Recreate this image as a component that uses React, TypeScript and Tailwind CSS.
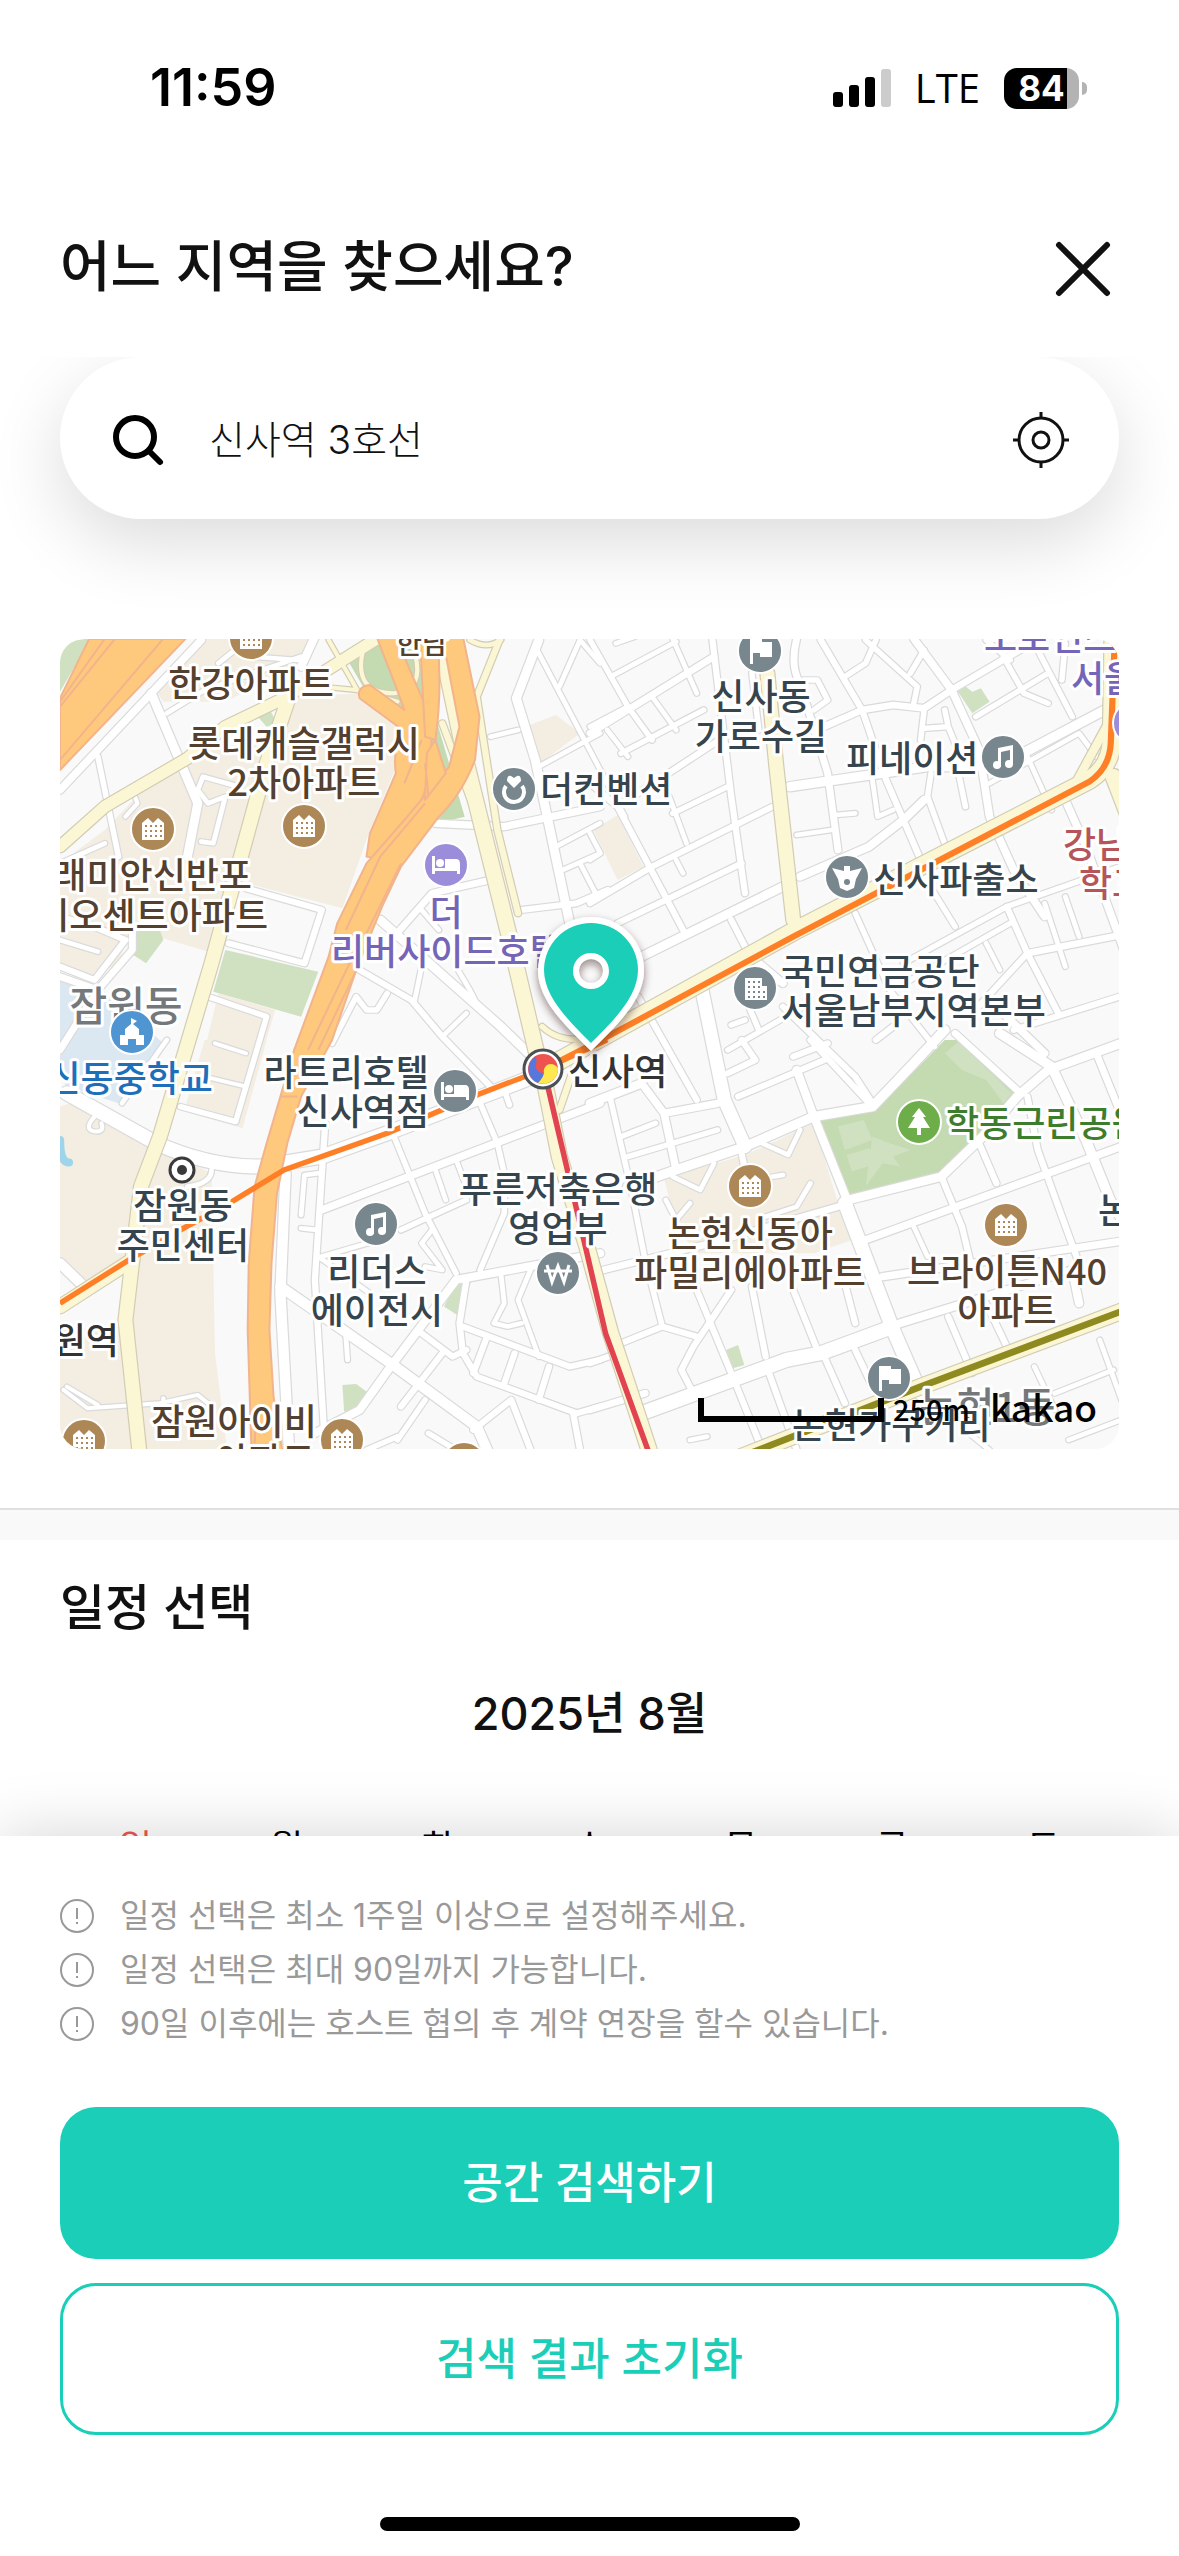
import { useId } from "react";
import type { ReactNode } from "react";

type Quad = "nw" | "ne" | "sw" | "se";
type Shape = { q: Quad; d: string };
type Road = Shape & { w: number };

const ORIGIN: Record<Quad, string> = {
  nw: "translate(0 0)",
  ne: "translate(1539 0)",
  sw: "translate(0 1230)",
  se: "translate(1539 1230)",
};

const BEIGE: Shape[] = [
  { q: "nw", d: "M410 26H720L700 100 480 215 300 215 270 170Z" },
  { q: "nw", d: "M690 200L880 190 1000 290 980 400 900 600 820 835 560 765 500 720 560 500 600 370Z" },
  { q: "nw", d: "M330 390L590 320 560 500 430 965 300 925 0 880V700L130 600 250 470Z" },
  { q: "nw", d: "M460 1090L625 1140 590 1260H420Z" },
  { q: "nw", d: "M0 900L200 905 170 1000 90 1040 0 1010Z" },
  { q: "nw", d: "M1365 285L1440 255 1510 310 1395 400Z" },
  { q: "ne", d: "M10 600L80 555 155 710 80 750Z" },
  { q: "sw", d: "M0 200L60 180 280 320 440 400 450 940 485 1230H0Z" },
  { q: "sw", d: "M420 0H600L530 265 360 215Z" },
  { q: "se", d: "M215 415L450 345 650 250 720 490 760 600 650 640 310 640 250 560Z" },
];

const LAND: (Shape & { c: string })[] = [
  { q: "sw", c: "#f9f9f9", d: "M0 660L60 740 190 700 170 860 0 870Z" },
  { q: "nw", c: "#d0e1c1", d: "M0 60Q30 26 90 26L0 185Z" },
  { q: "nw", c: "#c4dab1", d: "M835 90L900 40 1040 60 1060 190 1000 260 880 170Z" },
  { q: "nw", c: "#c4dab1", d: "M1090 260L1175 560 970 610 1060 400Z" },
  { q: "nw", c: "#d0e1c1", d: "M480 960L750 1025 700 1160 445 1085Z" },
  { q: "nw", c: "#d0e1c1", d: "M225 900H290L300 930 250 1000 205 970Z" },
  { q: "nw", c: "#d0e1c1", d: "M570 255L610 240 630 280 600 290Z" },
  { q: "nw", c: "#dbe8f2", d: "M0 1050L130 1085 300 1240 170 1420 20 1370 0 1340Z" },
  { q: "ne", c: "#d0e1c1", d: "M1065 180L1085 165 1110 185 1135 175 1160 215 1110 250Z" },
  { q: "sw", c: "#d0e1c1", d: "M1150 730L1195 720 1160 830 1115 800Z" },
  { q: "sw", c: "#d0e1c1", d: "M820 1035L860 1032 890 1055 865 1105 825 1115Z" },
  { q: "se", c: "#d0e1c1", d: "M395 930L430 915 448 975 415 985Z" },
  { q: "se", c: "#c4dab1", d: "M665 240L830 210 1030 0H1080L1240 170 1130 300 1020 405 745 470Z" },
  { q: "se", c: "#d0e1c1", d: "M1030 40L1070 5 1225 160 1200 190 1150 120 1080 90Z" },
  { q: "se", c: "#d0e1c1", d: "M720 260L795 240 820 300 740 330Z" },
  { q: "se", c: "#d0e1c1", d: "M745 345L810 325 835 350 820 375 760 395Z" },
  { q: "se", c: "#d0e1c1", d: "M820 290L870 310 930 330 880 350 900 380 850 370 800 440Z" },
];

const WHITE: Road[] = [
  { q: "nw", w: 22, d: "M0 480L265 190 410 30" },
  { q: "nw", w: 26, d: "M265 190L400 520 370 680" },
  { q: "nw", w: 16, d: "M110 380L170 680" },
  { q: "nw", w: 14, d: "M310 250L420 180 700 80" },
  { q: "nw", w: 14, d: "M460 100L520 50 560 80 690 90" },
  { q: "nw", w: 24, d: "M740 20L700 110" },
  { q: "nw", w: 14, d: "M520 470L415 440 400 480 430 520 480 500 445 640 410 635" },
  { q: "nw", w: 12, d: "M190 560L225 520 210 480" },
  { q: "nw", w: 14, d: "M0 700L130 640" },
  { q: "nw", w: 18, d: "M540 775L760 840 710 1000 490 940" },
  { q: "nw", w: 18, d: "M0 1010L100 1050 190 930 100 890 0 860" },
  { q: "nw", w: 14, d: "M0 930L110 965" },
  { q: "nw", w: 20, d: "M210 900V960L110 1080 0 1260" },
  { q: "nw", w: 20, d: "M0 1040L110 1080" },
  { q: "nw", w: 16, d: "M430 1100L600 1160 510 1475 350 1430" },
  { q: "nw", w: 12, d: "M450 1240L540 1270M420 1340L540 1370" },
  { q: "nw", w: 26, d: "M1390 30L1325 205 1380 390 1480 880" },
  { q: "nw", w: 14, d: "M1380 50L1640 560" },
  { q: "nw", w: 14, d: "M1250 320L1330 300M1390 410L1568 310" },
  { q: "nw", w: 14, d: "M1450 170L1510 30 1568 100" },
  { q: "nw", w: 22, d: "M1090 580L1290 590 1568 530" },
  { q: "nw", w: 14, d: "M1440 650L1568 580M1460 720L1568 670M1510 700L1560 800" },
  { q: "nw", w: 18, d: "M1340 840L1500 820 1590 780" },
  { q: "nw", w: 26, d: "M930 870L1280 1190 1360 1270" },
  { q: "nw", w: 20, d: "M970 920L1080 790 1250 750" },
  { q: "nw", w: 14, d: "M1050 840L1100 900M1030 1110L1050 1010" },
  { q: "nw", w: 18, d: "M870 1020L1020 1110 1110 1220 1260 1380" },
  { q: "nw", w: 14, d: "M1110 1220L1180 1150M1150 1010L1190 1080 1220 1140" },
  { q: "nw", w: 16, d: "M790 1240L860 1100 890 1140 920 1140 950 1090" },
  { q: "ne", w: 20, d: "M0 310L360 80" },
  { q: "ne", w: 14, d: "M60 140L250 35M75 40L130 20" },
  { q: "ne", w: 16, d: "M0 30L110 230 180 330" },
  { q: "ne", w: 14, d: "M180 200L250 300M50 300L110 380M110 230L0 290M240 26L310 190" },
  { q: "ne", w: 18, d: "M355 26L410 500 450 790" },
  { q: "ne", w: 16, d: "M90 370L330 240M240 550L400 470" },
  { q: "ne", w: 18, d: "M0 820L180 710 530 530" },
  { q: "ne", w: 18, d: "M80 530L270 900M0 460L80 530 390 320" },
  { q: "ne", w: 18, d: "M80 880L440 700" },
  { q: "ne", w: 26, d: "M130 990L560 770" },
  { q: "ne", w: 14, d: "M0 610L30 670 0 690M230 500L280 640M250 690L270 730" },
  { q: "ne", w: 18, d: "M410 870L490 1030 560 1060" },
  { q: "ne", w: 20, d: "M600 26Q580 110 610 160L690 430 720 660" },
  { q: "ne", w: 28, d: "M580 470L980 410 1120 410 1220 390 1568 200" },
  { q: "ne", w: 20, d: "M680 290L790 240 880 225 970 235 1050 180 1330 10" },
  { q: "ne", w: 18, d: "M670 30L790 240 860 450 960 690" },
  { q: "ne", w: 16, d: "M830 30L800 100 740 140M800 30L950 170 940 220M970 60L930 130" },
  { q: "ne", w: 22, d: "M940 26L1050 180 1130 360 1160 560 1230 720 1320 860" },
  { q: "ne", w: 16, d: "M1200 80L1260 190 1330 220M1120 260L1330 130" },
  { q: "ne", w: 16, d: "M1300 60L1400 260M1150 30L1220 90M1380 40L1370 150" },
  { q: "ne", w: 14, d: "M1160 460L1420 310 1470 380M1270 380L1340 540" },
  { q: "ne", w: 16, d: "M990 430L980 500 1040 670M1070 430L1090 530" },
  { q: "ne", w: 14, d: "M820 450L835 560 880 540M710 555L770 550M600 615L700 600" },
  { q: "ne", w: 24, d: "M610 740L810 650 910 570 970 510" },
  { q: "ne", w: 16, d: "M970 240L960 330M970 295L1040 290 1030 240M1040 290L1060 340" },
  { q: "ne", w: 16, d: "M620 150L660 150 690 210 650 240M470 130L490 300" },
  { q: "ne", w: 16, d: "M770 850L870 1080 1000 1250M970 740L1060 890" },
  { q: "ne", w: 22, d: "M1380 510L1440 650 1568 1010" },
  { q: "ne", w: 16, d: "M910 1000L1210 830 1568 700M930 1050L1220 880" },
  { q: "ne", w: 20, d: "M1270 970L1568 910" },
  { q: "ne", w: 18, d: "M1210 830L1270 970 1360 1150M1270 970L1110 1150M1230 1200L1568 1090" },
  { q: "ne", w: 14, d: "M1320 820L1380 1010M1380 800L1420 920M1150 940L1190 1020" },
  { q: "ne", w: 22, d: "M1180 1130L1320 1270M480 990L560 1060" },
  { q: "ne", w: 38, d: "M325 1080L390 1410 450 1550" },
  { q: "ne", w: 16, d: "M400 1260L620 1130M410 1185L450 1170M440 1080L490 1200" },
  { q: "ne", w: 18, d: "M560 1130L770 1340 820 1420M830 1230L880 1190" },
  { q: "ne", w: 18, d: "M140 1100L310 1410" },
  { q: "sw", w: 42, d: "M20 160L280 310Q430 380 580 380L760 350 950 280 1400 100" },
  { q: "sw", w: 30, d: "M655 400L640 760 665 1230" },
  { q: "sw", w: 30, d: "M640 740L960 970 1210 1160 1240 1230" },
  { q: "sw", w: 24, d: "M1568 640L1150 720 960 980 870 1110 740 1180" },
  { q: "sw", w: 18, d: "M770 250L740 720 770 1230" },
  { q: "sw", w: 22, d: "M760 510L1568 190" },
  { q: "sw", w: 16, d: "M990 570L1180 480M970 290L1060 520 1150 700" },
  { q: "sw", w: 16, d: "M1220 190L1270 310 1290 400 1290 520 1220 690M1290 150L1305 195" },
  { q: "sw", w: 18, d: "M1050 880L1140 950 1180 930M1110 940L990 1100M1170 860L1480 980 1568 960" },
  { q: "sw", w: 18, d: "M1180 720L1160 850 1170 940 1210 1010 1500 1120 1568 1100" },
  { q: "sw", w: 14, d: "M1370 680L1330 780 1390 950M1280 700L1290 790 1260 850 1300 860 1340 850" },
  { q: "sw", w: 18, d: "M1240 890L1200 1000M1320 940L1290 1030M1420 980L1390 1080M1310 1080L1370 1240M1310 1080L1200 1170M1490 1120L1510 1230" },
  { q: "sw", w: 14, d: "M1090 390L1120 480M1150 360L1180 440M700 525L710 405 750 400M760 650L960 590" },
  { q: "sw", w: 14, d: "M1060 680L1110 690 1050 610 1080 570M700 565L745 570M750 650L900 760M830 890L835 960" },
  { q: "sw", w: 16, d: "M980 1200L1060 1080M1070 1180L1150 1230M890 1230L980 1190" },
  { q: "sw", w: 12, d: "M10 1050L80 1105 290 1090 400 1065 430 1090M110 1095L20 1040M300 1090L300 1075" },
  { q: "sw", w: 12, d: "M110 220Q60 270 105 275 130 275 120 250" },
  { q: "sw", w: 30, d: "M0 670L60 730" },
  { q: "sw", w: 14, d: "M310 0L180 190M440 390Q440 430 370 440" },
  { q: "se", w: 24, d: "M600 90L650 230 750 490" },
  { q: "se", w: 26, d: "M0 190L150 130" },
  { q: "se", w: 22, d: "M150 130L215 220 370 190M215 220L250 390" },
  { q: "se", w: 28, d: "M110 440L250 390 450 320 650 230 820 200 940 70 1030 -30" },
  { q: "se", w: 18, d: "M820 200L640 0M590 50L690 10M440 0L480 60 400 100" },
  { q: "se", w: 16, d: "M60 180L120 450 160 660 210 860M90 290L190 250M110 350L370 270" },
  { q: "se", w: 18, d: "M430 170L680 60M440 340L450 390" },
  { q: "se", w: 26, d: "M750 480L1020 410 1140 290 1240 170 1330 90 1568 0" },
  { q: "se", w: 20, d: "M1060 -20L1250 160M1470 40L1568 290" },
  { q: "se", w: 28, d: "M1190 -20L1340 80 1440 300 1510 480 1568 580" },
  { q: "se", w: 18, d: "M1270 170L1300 330 1430 700M1130 310L1180 430M1020 410L1080 560 1110 690" },
  { q: "se", w: 22, d: "M800 600L1568 310M850 710L1568 600" },
  { q: "se", w: 24, d: "M900 850L1400 690 1420 790" },
  { q: "se", w: 40, d: "M740 490L880 870 960 1060" },
  { q: "se", w: 42, d: "M150 1120L570 960 670 940 880 860" },
  { q: "se", w: 20, d: "M0 700L350 610 720 500M0 1110L160 1060" },
  { q: "se", w: 18, d: "M290 700L430 1050 500 1230M470 740L510 950M590 750L660 930M740 730L770 850" },
  { q: "se", w: 18, d: "M90 910L210 860 310 890M410 750L300 920 265 990 300 1060M0 970L80 940" },
  { q: "se", w: 18, d: "M520 1000L600 1230M680 950L740 1090M770 930L820 1040M1040 830L1110 1000M1150 790L1210 920" },
  { q: "se", w: 14, d: "M940 560L980 650M1290 980L1350 1110M1480 900L1568 1150M1350 1060L1520 990M1390 1200L1568 1130M1100 1180L1160 1230M290 1200L340 1190" },
  { q: "se", w: 14, d: "M240 410L320 450 360 370M500 310L575 345 610 270M640 430L600 500 510 530M220 480L250 540 290 490M530 410L560 405" },
];

const YELLOW: Road[] = [
  { q: "nw", w: 34, d: "M0 650L130 530 370 385 480 290 660 200 760 130 960 0" },
  { q: "nw", w: 40, d: "M675 170L600 400 520 700 440 1000 290 1520 235 1670 190 2070 230 2460" },
  { q: "nw", w: 12, d: "M780 172L860 180 980 215M880 60Q850 190 970 190 1060 180 1030 70M780 30L860 175" },
  { q: "nw", w: 44, d: "M1110 60L1180 400 1300 900 1400 1340" },
  { q: "nw", w: 18, d: "M1280 20L1210 200 1270 600 1330 850M1110 280L1200 530" },
  { q: "nw", w: 14, d: "M1190 30Q1240 60 1280 30" },
  { q: "nw", w: 16, d: "M1400 1190Q1450 1240 1540 1225" },
  { q: "sw", w: 44, d: "M1400 90L1450 350 1530 620 1599 880 1720 1260" },
  { q: "sw", w: 18, d: "M1450 210L1490 90" },
  { q: "sw", w: 40, d: "M0 800L210 660" },
  { q: "ne", w: 40, d: "M515 130L540 400 590 870" },
  { q: "ne", w: 24, d: "M1410 460L1510 270" },
  { q: "ne", w: 46, d: "M1520 440L1580 600" },
  { q: "ne", w: 52, d: "M-120 1310L590 905 1450 450Q1512 410 1515 330L1520 20" },
  { q: "se", w: 46, d: "M440 1250L960 1040 1580 800" },
];

const HIGHWAY: string[] = [
  "M85 26H365L0 420V205Z",
  "M920 20H980C1010 130 1070 220 1080 300L1075 420C1060 520 1000 610 940 690L890 680 900 610 975 430C970 380 975 330 995 300L870 205Q860 170 900 165L1000 240C970 150 940 80 920 20Z",
  "M1045 20H1095C1105 120 1105 220 1090 330L1060 320Z",
  "M1110 20H1170L1218 260 1205 390C1190 430 1160 500 1100 560L990 710 935 830 860 1020 790 1230 700 1400 660 1540 630 1690 614 1900 608 2100 620 2300 645 2460H556L545 2100 548 1900 565 1670 600 1540 640 1400 680 1260 780 980 805 880 890 700 1000 570 1130 410 1160 290Z",
  "M1065 370L1090 330 1120 430 1060 510Z",
];

const HIGHWAY_LINES =
  "M0 215L130 26M0 230L160 26M0 390L300 26M830 900L930 680 1060 520M890 910L990 700M720 1260L850 980M750 1260L870 1000M1060 400L1070 500M1000 460L1050 330M565 2440L570 2350M640 1400L690 1400";

const RAIL: (Shape & { c: string; w: number })[] = [
  { q: "sw", c: "#ff7f27", w: 16, d: "M0 790L200 660 350 570 500 485 650 390 950 280 1210 165 1400 90 1589 0" },
  { q: "ne", c: "#ff7f27", w: 18, d: "M-120 1310L50 1220 590 920 1450 455Q1508 415 1512 340L1524 20" },
  { q: "se", c: "#8f8a20", w: 20, d: "M440 1250L960 1040 1580 800" },
  { q: "sw", c: "#e14450", w: 16, d: "M1405 90L1480 420 1530 640 1584 880 1714 1250" },
];

type Glyph =
  | "apartment" | "office" | "flag" | "music" | "bed" | "heart" | "police" | "won" | "tree" | "school";

function PoiGlyph({ kind }: { kind: Glyph }) {
  switch (kind) {
    case "apartment":
      return (
        <g>
          <path fill="#fff" d="M-11 -6L-5 -11 0 -6 5 -11 11 -6V11H-11Z" />
          <path stroke="#ad8856" strokeWidth="2" strokeDasharray="2 3" d="M-8 -3H9M-8 2H9M-8 7H9" />
        </g>
      );
    case "office":
      return (
        <g>
          <path fill="#fff" d="M-10 -10H7V-2H12V12H-10Z" />
          <path stroke="#78868d" strokeWidth="2" strokeDasharray="2 3" d="M-7 -6H5M-7 -1H5M-7 4H10M-7 9H10" />
        </g>
      );
    case "flag":
      return <path fill="#fff" d="M-10 -12H2V-9H12V6H0V2H-7V13H-10Z" />;
    case "music":
      return (
        <g fill="#fff">
          <path fillRule="evenodd" d="M-5 -9L10 -12V7H7V-7L-2 -5V10H-5Z" />
          <circle cx="-6" cy="8" r="4" />
          <circle cx="6" cy="7" r="4" />
        </g>
      );
    case "bed":
      return (
        <g>
          <path fill="#fff" d="M-14 -9H-11V3H-1V-6H10Q14 -6 14 -1V9H11V6H-11V9H-14Z" />
          <circle cx="-6" cy="-2" r="4" fill="#fff" />
        </g>
      );
    case "heart":
      return (
        <g>
          <path fill="none" stroke="#fff" strokeWidth="4" d="M-8 -3A10 10 0 1 0 8 -3" />
          <path fill="#fff" d="M0 -1L-7 -8Q-7 -14 -3 -13L0 -11 3 -13Q7 -14 7 -8Z" />
        </g>
      );
    case "police":
      return (
        <g>
          <path fill="#fff" d="M-15 -9L-3 -6V-11H3V-6L15 -9 9 2 7 11 0 14 -7 11 -9 2Z" />
          <circle cx="0" cy="5" r="3" fill="#78868d" />
        </g>
      );
    case "won":
      return (
        <path
          fill="none"
          stroke="#fff"
          strokeWidth="3"
          d="M-11 -8L-6 9 0 -7 6 9 11 -8M-14 -2H14"
        />
      );
    case "tree":
      return <path fill="#fff" d="M0 -14L7 -5H4L11 6H2V13H-2V6H-11L-4 -5H-7Z" />;
    case "school":
      return <path fill="#fff" d="M-1 -14L5 -11 1 -8 7 -3V3H12V13H4V7H-4V13H-12V3H-7V-3L-1 -8Z" />;
  }
}

const POIS: { x: number; y: number; c: string; kind: Glyph }[] = [
  { x: 191, y: -1, c: "#ad8856", kind: "apartment" },
  { x: 93, y: 190, c: "#ad8856", kind: "apartment" },
  { x: 244, y: 187, c: "#ad8856", kind: "apartment" },
  { x: 24, y: 802, c: "#ad8856", kind: "apartment" },
  { x: 282, y: 801, c: "#ad8856", kind: "apartment" },
  { x: 404, y: 825, c: "#ad8856", kind: "apartment" },
  { x: 690, y: 547, c: "#ad8856", kind: "apartment" },
  { x: 946, y: 586, c: "#ad8856", kind: "apartment" },
  { x: 454, y: 150, c: "#78868d", kind: "heart" },
  { x: 386, y: 226, c: "#9c8dda", kind: "bed" },
  { x: 395, y: 452, c: "#78868d", kind: "bed" },
  { x: 72, y: 393, c: "#4f95d2", kind: "school" },
  { x: 700, y: 12, c: "#78868d", kind: "flag" },
  { x: 829, y: 739, c: "#78868d", kind: "flag" },
  { x: 943, y: 118, c: "#78868d", kind: "music" },
  { x: 316, y: 585, c: "#78868d", kind: "music" },
  { x: 787, y: 238, c: "#78868d", kind: "police" },
  { x: 695, y: 349, c: "#78868d", kind: "office" },
  { x: 498, y: 634, c: "#78868d", kind: "won" },
  { x: 859, y: 483, c: "#6eae4a", kind: "tree" },
  { x: 1075, y: 84, c: "#9c8dda", kind: "bed" },
];

type Anchor = "start" | "middle" | "end";
type Label = { t: string; x: number; y: number; c: string; a: Anchor };

const BROWN = "#54402f";
const SLATE = "#36454d";
const PURPLE = "#7565b8";

const LABELS: Label[] = [
  { t: "한강아파트", x: 191, y: 58, c: BROWN, a: "middle" },
  { t: "롯데캐슬갤럭시", x: 244, y: 118, c: BROWN, a: "middle" },
  { t: "2차아파트", x: 244, y: 157, c: BROWN, a: "middle" },
  { t: "래미안신반포", x: 192, y: 250, c: BROWN, a: "end" },
  { t: "리오센트아파트", x: 208, y: 290, c: BROWN, a: "end" },
  { t: "더", x: 386, y: 287, c: PURPLE, a: "middle" },
  { t: "리버사이드호텔", x: 271, y: 326, c: PURPLE, a: "start" },
  { t: "더컨벤션", x: 480, y: 164, c: SLATE, a: "start" },
  { t: "신사동", x: 701, y: 71, c: SLATE, a: "middle" },
  { t: "가로수길", x: 701, y: 111, c: SLATE, a: "middle" },
  { t: "피네이션", x: 786, y: 133, c: SLATE, a: "start" },
  { t: "도로인스", x: 924, y: 12, c: PURPLE, a: "start" },
  { t: "서울", x: 1011, y: 53, c: PURPLE, a: "start" },
  { t: "강남", x: 1003, y: 219, c: "#b5555a", a: "start" },
  { t: "학교", x: 1019, y: 258, c: "#b5555a", a: "start" },
  { t: "신사파출소", x: 813, y: 254, c: SLATE, a: "start" },
  { t: "국민연금공단", x: 721, y: 346, c: SLATE, a: "start" },
  { t: "서울남부지역본부", x: 721, y: 385, c: SLATE, a: "start" },
  { t: "신동중학교", x: 153, y: 453, c: "#1e6fba", a: "end" },
  { t: "라트리호텔", x: 369, y: 447, c: SLATE, a: "end" },
  { t: "신사역점", x: 369, y: 486, c: SLATE, a: "end" },
  { t: "신사역", x: 508, y: 446, c: "#333333", a: "start" },
  { t: "잠원동", x: 123, y: 580, c: SLATE, a: "middle" },
  { t: "주민센터", x: 123, y: 620, c: SLATE, a: "middle" },
  { t: "잠원역", x: 59, y: 715, c: "#333333", a: "end" },
  { t: "리더스", x: 317, y: 646, c: SLATE, a: "middle" },
  { t: "에이전시", x: 317, y: 685, c: SLATE, a: "middle" },
  { t: "푸른저축은행", x: 498, y: 564, c: SLATE, a: "middle" },
  { t: "영업부", x: 498, y: 603, c: SLATE, a: "middle" },
  { t: "잠원아이비", x: 174, y: 796, c: BROWN, a: "middle" },
  { t: "아파트", x: 255, y: 835, c: BROWN, a: "end" },
  { t: "논현신동아", x: 690, y: 608, c: BROWN, a: "middle" },
  { t: "파밀리에아파트", x: 690, y: 647, c: BROWN, a: "middle" },
  { t: "브라이튼N40", x: 947, y: 646, c: BROWN, a: "middle" },
  { t: "아파트", x: 947, y: 685, c: BROWN, a: "middle" },
  { t: "학동근린공원", x: 886, y: 498, c: "#3f7d2e", a: "start" },
  { t: "논현", x: 1038, y: 585, c: SLATE, a: "start" },
  { t: "논현가구거리", x: 732, y: 800, c: SLATE, a: "start" },
];

function Layer({ q, children }: { q: Quad; children: ReactNode }) {
  return <g transform={ORIGIN[q]}>{children}</g>;
}

function Roads({ roads, casing, fill }: { roads: Road[]; casing: string; fill: string }) {
  return (
    <g fill="none" strokeLinecap="round" strokeLinejoin="round">
      <g stroke={casing}>
        {roads.map((r, i) => (
          <Layer key={i} q={r.q}>
            <path d={r.d} strokeWidth={r.w + 7} />
          </Layer>
        ))}
      </g>
      <g stroke={fill}>
        {roads.map((r, i) => (
          <Layer key={i} q={r.q}>
            <path d={r.d} strokeWidth={r.w} />
          </Layer>
        ))}
      </g>
    </g>
  );
}

function StationMap() {
  const shadow = useId();
  return (
    <svg
      role="img"
      aria-label="신사역 주변 지도"
      viewBox="0 0 1059 810"
      preserveAspectRatio="xMidYMid slice"
      className="block w-full rounded-3xl bg-[#f9f9f9] font-['Noto_Sans_CJK_KR',sans-serif]"
    >
      <defs>
        <filter id={shadow} x="-30%" y="-30%" width="160%" height="160%">
          <feDropShadow dx="0" dy="4" stdDeviation="4" floodColor="#301010" floodOpacity="0.5" />
        </filter>
      </defs>

      <g transform="translate(0 -9) scale(.3444 .3333)">
        {BEIGE.map((s, i) => (
          <Layer key={i} q={s.q}>
            <path d={s.d} fill="#f3ede2" />
          </Layer>
        ))}
        {LAND.map((s, i) => (
          <Layer key={i} q={s.q}>
            <path d={s.d} fill={s.c} />
          </Layer>
        ))}
        <path d="M0 1530Q0 1598 26 1598" fill="none" stroke="#9fd5ea" strokeWidth="24" strokeLinecap="round" />
        <Roads roads={WHITE} casing="#dadada" fill="#ffffff" />
        <Roads roads={YELLOW} casing="#d2ccb4" fill="#fbf6d4" />
        <g fill="#ffc97d" stroke="#f2b48c" strokeWidth="6" strokeLinejoin="round">
          {HIGHWAY.map((d) => (
            <path key={d} d={d} />
          ))}
        </g>
        <path d={HIGHWAY_LINES} fill="none" stroke="#f2b48c" strokeWidth="6" />
        {RAIL.map((r, i) => (
          <Layer key={i} q={r.q}>
            <path d={r.d} fill="none" stroke={r.c} strokeWidth={r.w} strokeLinejoin="round" />
          </Layer>
        ))}
      </g>

      <g strokeWidth="6" strokeLinejoin="round" stroke="#ffffff" fontWeight="500" paintOrder="stroke">
        <text x="362" y="15" fontSize="28" fill={BROWN} textAnchor="middle">한남</text>
        <g fontSize="41" fill="#75787a">
          <text x="66" y="382" textAnchor="middle">잠원동</text>
          <text x="859" y="783">논현1동</text>
        </g>
      </g>

      {POIS.map((p, i) => (
        <g key={i} transform={`translate(${p.x} ${p.y})`}>
          <circle r="22" fill={p.c} stroke="#fff" strokeWidth="2" />
          <PoiGlyph kind={p.kind} />
        </g>
      ))}

      <g transform="translate(122 531)">
        <circle r="12" fill="#fff" stroke="#3a3a3a" strokeWidth="3" />
        <circle r="5" fill="#3a3a3a" />
      </g>

      <g fontSize="36" fontWeight="500" stroke="#ffffff" strokeWidth="6" strokeLinejoin="round" paintOrder="stroke">
        {LABELS.map((l, i) => (
          <text key={i} x={l.x} y={l.y} fill={l.c} textAnchor={l.a}>
            {l.t}
          </text>
        ))}
      </g>

      <g transform="translate(483 430)">
        <circle r="19" fill="#fff" stroke="#4a5054" strokeWidth="3" />
        <circle r="15" fill="#ef5350" />
        <path fill="#5677dc" d="M-7 -13A15 15 0 0 0 0 15Q3 8 0 4 -8 3 -7 -4 -6 -9 -7 -13Z" />
        <path fill="#ffe94f" d="M-5 14A15 15 0 0 0 15 -1Q10 -7 4 -4 0 -1 1 4 0 9 -5 14Z" />
      </g>

      <g filter={`url(#${shadow})`}>
        <path
          fill="#fff"
          fillRule="evenodd"
          d="M531 412C507 388 478 362 478 331A53 53 0 0 1 584 331C584 362 555 388 531 412ZM531 320A12 12 0 0 0 531 344A12 12 0 0 0 531 320Z"
        />
      </g>
      <path
        fill="#1bceb8"
        fillRule="evenodd"
        d="M531 404C509 382 484 358 484 331A47 47 0 0 1 578 331C578 358 553 382 531 404ZM531 314A18 18 0 0 0 531 350A18 18 0 0 0 531 314Z"
      />

      <path fill="none" stroke="#000" strokeWidth="6" d="M641 759V780H821V759" />
      <text x="833" y="782" fontSize="29" fontWeight="500">250m</text>
      <text x="930" y="783" fontSize="37" fontWeight="500">kakao</text>
    </svg>
  );
}

function StatusBar() {
  return (
    <div className="flex h-[176px] items-center justify-between pr-[92px] pl-[150px]">
      <span className="text-[52px] leading-none font-semibold text-black">11:59</span>
      <div className="flex items-center gap-6">
        <svg width="58" height="38" viewBox="0 0 58 38" aria-hidden="true">
          <rect x="0" y="23" width="10" height="15" rx="3" />
          <rect x="16" y="16" width="10" height="22" rx="3" />
          <rect x="32" y="8" width="10" height="30" rx="3" />
          <rect x="48" y="0" width="10" height="38" rx="3" fill="#cccccc" />
        </svg>
        <span className="text-[40px] leading-none font-medium text-black font-['Open_Sans',sans-serif]">LTE</span>
        <div className="flex items-center gap-[3px]">
          <div className="flex h-[41px] w-[75px] items-center justify-center rounded-[13px] bg-[linear-gradient(90deg,#000_84%,#b3b3b3_84%)] text-[35px] leading-none font-bold text-white">
            84
          </div>
          <div className="h-[13px] w-[5px] rounded-r-full bg-[#b3b3b3]" />
        </div>
      </div>
    </div>
  );
}

const WEEKDAYS = ["일", "월", "화", "수", "목", "금", "토"];

const NOTES = [
  "일정 선택은 최소 1주일 이상으로 설정해주세요.",
  "일정 선택은 최대 90일까지 가능합니다.",
  "90일 이후에는 호스트 협의 후 계약 연장을 할수 있습니다.",
];

export default function App() {
  return (
    <div className="flex h-screen flex-col overflow-hidden bg-white font-[Inter,'Noto_Sans_CJK_KR',sans-serif] text-[#111111]">
      <header>
        <StatusBar />
        <div className="flex h-[181px] items-center justify-between px-[60px]">
          <h1 className="text-[55px] leading-none font-medium">어느 지역을 찾으세요?</h1>
          <button type="button" aria-label="닫기" className="pt-1 pr-2">
            <svg width="56" height="56" viewBox="0 0 56 56" aria-hidden="true">
              <path d="M4 4L52 52M52 4L4 52" stroke="#111" strokeWidth="6" strokeLinecap="round" />
            </svg>
          </button>
        </div>
      </header>

      <main className="min-h-0 flex-1 overflow-y-auto [scrollbar-width:none]">
        <div className="px-[60px] pb-[59px]">
          <div className="mb-[120px] flex h-[162px] items-center gap-11 rounded-full bg-white pt-1 pr-[50px] pl-[52px] shadow-[0_24px_72px_rgba(0,0,0,0.14)]">
            <svg width="53" height="53" viewBox="0 0 53 53" fill="none" className="shrink-0" aria-hidden="true">
              <circle cx="23" cy="23" r="19" stroke="#000" strokeWidth="6" />
              <path d="M37 37L48 48" stroke="#000" strokeWidth="6" strokeLinecap="round" />
            </svg>
            <input
              type="text"
              aria-label="지역 검색"
              defaultValue="신사역 3호선"
              className="min-w-0 flex-1 bg-transparent text-[39px] font-light outline-none"
            />
            <button type="button" aria-label="현재 위치" className="shrink-0">
              <svg width="56" height="56" viewBox="0 0 56 56" fill="none" stroke="#111" strokeWidth="3" aria-hidden="true">
                <circle cx="28" cy="28" r="22" />
                <circle cx="28" cy="28" r="8" />
                <path d="M28 0V6M28 50V56M0 28H6M50 28H56" />
              </svg>
            </button>
          </div>
          <StationMap />
        </div>

        <div className="h-8 border-t-2 border-[#e0e0e0] bg-[#f9f9f9]" />

        <section className="px-[60px] pt-10">
          <h2 className="text-[49px] leading-[56px] font-medium">일정 선택</h2>
          <p className="mt-[50px] text-center text-[45px] leading-[56px] font-medium">2025년 8월</p>
          <div className="mt-[84px] grid grid-cols-7 text-center text-[36px] leading-[44px] font-normal text-black">
            {WEEKDAYS.map((d) => (
              <span key={d} className="first:text-[#f05650]">
                {d}
              </span>
            ))}
          </div>
        </section>
      </main>

      <footer className="relative bg-white px-[60px] pt-[53px] pb-[25px] shadow-[0_0_60px_rgba(0,0,0,0.17)]">
        <ul className="flex flex-col text-[32px] leading-[54px] font-normal text-[#999999]">
          {NOTES.map((n) => (
            <li key={n} className="flex items-center gap-[26px]">
              <svg width="34" height="34" viewBox="0 0 34 34" fill="none" stroke="#999" strokeWidth="2" className="shrink-0" aria-hidden="true">
                <circle cx="17" cy="17" r="16" />
                <path d="M17 9V20M17 23V25" />
              </svg>
              {n}
            </li>
          ))}
        </ul>
        <div className="mt-[56px] flex flex-col gap-6 text-[44px] font-medium">
          <button type="button" className="h-[152px] rounded-[36px] bg-[#1bceb8] text-white">
            공간 검색하기
          </button>
          <button type="button" className="h-[152px] rounded-[36px] border-[3px] border-[#1bceb8] bg-white text-[#1bceb8]">
            검색 결과 초기화
          </button>
        </div>
        <div className="mx-auto mt-[82px] h-[14px] w-[420px] rounded-full bg-black" />
      </footer>
    </div>
  );
}
